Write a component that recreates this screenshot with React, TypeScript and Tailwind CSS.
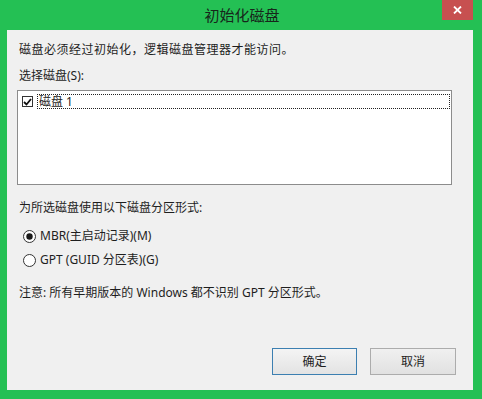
import React from 'react';

const font = { fontFamily: '"Noto Sans", "Noto Sans CJK SC", sans-serif' };

const Radio = ({ checked }: { checked?: boolean }) => (
    <svg width="13" height="13" viewBox="0 0 13 13" className="shrink-0">
        <circle cx="6.5" cy="6.5" r="6" fill="#fff" stroke="#333" strokeWidth="1" />
        {checked && <circle cx="6.5" cy="6.5" r="3.2" fill="#1a1a1a" />}
    </svg>
);

const App = () => {
    return (
        <div
            className="w-[482px] h-[399px] bg-[#24c054] flex flex-col text-[12px] leading-[16px] text-[#1e1e1e]"
            style={font}
        >
            {/* title bar */}
            <div className="relative h-[30px] flex items-center justify-center">
                <span className="text-[15px] text-[#17261b] pl-[2px]">初始化磁盘</span>
                <div className="absolute right-[9px] top-0 w-[31px] h-[20px] bg-[#c75050] flex items-center justify-center">
                    <svg width="9" height="8" viewBox="0 0 9 8">
                        <path d="M1 0.5 L8 7.5 M8 0.5 L1 7.5" stroke="#fff" strokeWidth="1.8" />
                    </svg>
                </div>
            </div>

            {/* body */}
            <div className="ml-[7px] mr-[9px] mb-[9px] flex-1 bg-[#f0f0f0] flex flex-col pl-[12px] pr-[17px] pt-[12px]">
                <div className="tracking-[0.5px]">磁盘必须经过初始化，逻辑磁盘管理器才能访问。</div>
                <div className="mt-[10px]">选择磁盘(S):</div>

                <div className="mt-[6px] ml-[-2px] w-[435px] h-[95px] bg-white border border-[#8c8c8c] pt-[3px] pl-[4px] pr-[1px]">
                    <div className="flex items-center gap-[4px]">
                        <div className="w-[11px] h-[11px] border border-[#333] bg-white flex items-center justify-center shrink-0">
                            <svg width="9" height="8" viewBox="0 0 9 8">
                                <path d="M1 4 L3.5 6.5 L8 1" fill="none" stroke="#111" strokeWidth="1.8" />
                            </svg>
                        </div>
                        <div className="flex-1 h-[15px] border border-dotted border-[#222] flex items-center pl-[1px]">
                            磁盘 1
                        </div>
                    </div>
                </div>

                <div className="mt-[15px]">为所选磁盘使用以下磁盘分区形式:</div>
                <div className="mt-[12px] ml-[4px] flex items-center gap-[4px]">
                    <Radio checked />
                    <span>MBR(主启动记录)(M)</span>
                </div>
                <div className="mt-[8px] ml-[4px] flex items-center gap-[4px]">
                    <Radio />
                    <span>GPT (GUID 分区表)(G)</span>
                </div>

                <div className="mt-[17px]">注意: 所有早期版本的 Windows 都不识别 GPT 分区形式。</div>

                <div className="mt-[47px] flex justify-end gap-[13px]">
                    <button className="w-[85px] h-[27px] border border-[#3c7fb1] bg-gradient-to-b from-[#f4f4f4] to-[#e3e3e3] text-[12px]">
                        确定
                    </button>
                    <button className="w-[86px] h-[27px] border border-[#acacac] bg-gradient-to-b from-[#f0f0f0] to-[#e1e1e1] text-[12px]">
                        取消
                    </button>
                </div>
            </div>
        </div>
    );
};

export default App;
